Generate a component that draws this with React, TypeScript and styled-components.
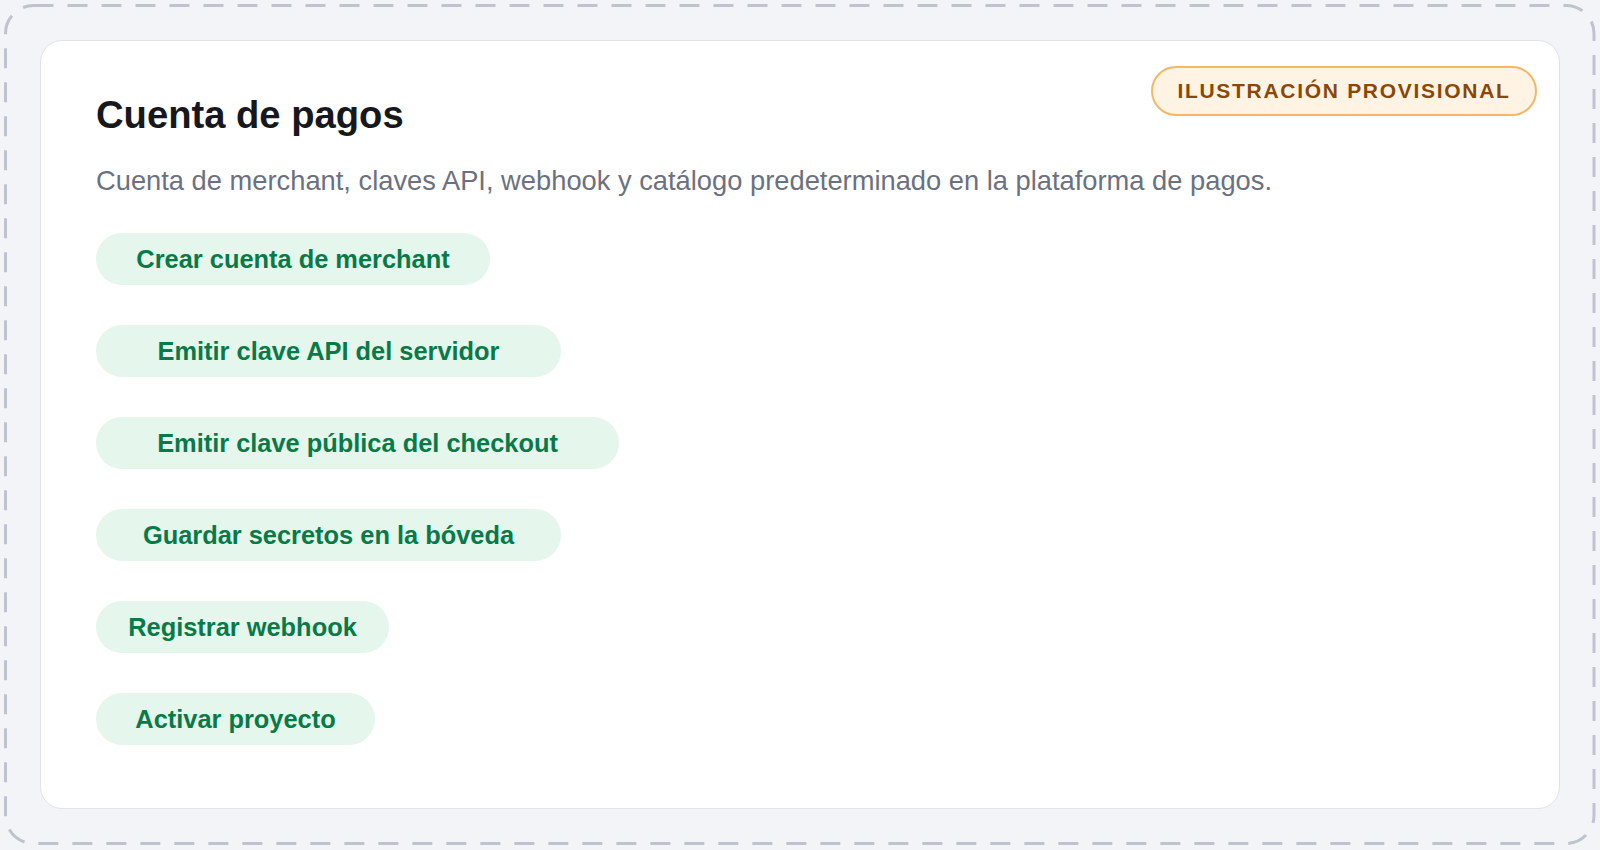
import React from "react";
import styled, { createGlobalStyle } from "styled-components";

const GlobalStyle = createGlobalStyle`
  * { box-sizing: border-box; }
  html, body {
    margin: 0;
    padding: 0;
    background: #f3f4f8;
    font-family: "Liberation Sans", Arial, Helvetica, sans-serif;
  }
`;

const Frame = styled.div`
  position: relative;
  height: 850px;
  padding: 40px 40px 41px;
  display: flex;
`;

// dashed outline round the whole panel
const FrameOutline = styled.svg`
  position: absolute;
  inset: 0;
  width: 100%;
  height: 100%;
  pointer-events: none;
`;

const Card = styled.section`
  position: relative;
  flex: 1;
  background: #ffffff;
  border: 1px solid #e2e4ea;
  border-radius: 22px;
  padding: 52px 55px 0;
  display: flex;
  flex-direction: column;
  align-items: flex-start;
`;

const Badge = styled.span`
  position: absolute;
  top: 25px;
  right: 22px;
  width: 386px;
  height: 50px;
  display: flex;
  align-items: center;
  justify-content: center;
  border: 2px solid #f2b866;
  border-radius: 999px;
  background: #fff4e4;
  color: #8a4708;
  font-size: 21px;
  font-weight: 700;
  letter-spacing: 1.7px;
  text-transform: uppercase;
`;

const Title = styled.h1`
  margin: 0;
  font-size: 38.2px;
  line-height: 44px;
  font-weight: 700;
  color: #16181d;
`;

const Subtitle = styled.p`
  margin: 25px 0 33px;
  font-size: 27.3px;
  line-height: 38px;
  color: #6b7180;
`;

const Steps = styled.div`
  display: flex;
  flex-direction: column;
  gap: 40px;
`;

const StepButton = styled.button<{ $width: number }>`
  width: ${(p) => p.$width}px;
  height: 52px;
  border: none;
  border-radius: 999px;
  background: #e5f6ec;
  color: #087a47;
  font-family: inherit;
  font-size: 25.4px;
  font-weight: 700;
  cursor: pointer;
  padding: 0;
`;

const steps = [
  { label: "Crear cuenta de merchant", width: 394 },
  { label: "Emitir clave API del servidor", width: 465 },
  { label: "Emitir clave pública del checkout", width: 523 },
  { label: "Guardar secretos en la bóveda", width: 465 },
  { label: "Registrar webhook", width: 293 },
  { label: "Activar proyecto", width: 279 },
];

export default function App() {
  return (
    <>
      <GlobalStyle />
      <Frame>
        <FrameOutline viewBox="0 0 1600 850" preserveAspectRatio="none">
          <rect
            x="5.5"
            y="5.5"
            width="1588.5"
            height="838"
            rx="28"
            fill="none"
            stroke="#bfc3ce"
            strokeWidth="3"
            strokeDasharray="20 14"
          />
        </FrameOutline>
        <Card>
          <Badge>Ilustración provisional</Badge>
          <Title>Cuenta de pagos</Title>
          <Subtitle>
            Cuenta de merchant, claves API, webhook y catálogo predeterminado en la plataforma de pagos.
          </Subtitle>
          <Steps>
            {steps.map((s) => (
              <StepButton key={s.label} $width={s.width}>
                {s.label}
              </StepButton>
            ))}
          </Steps>
        </Card>
      </Frame>
    </>
  );
}
